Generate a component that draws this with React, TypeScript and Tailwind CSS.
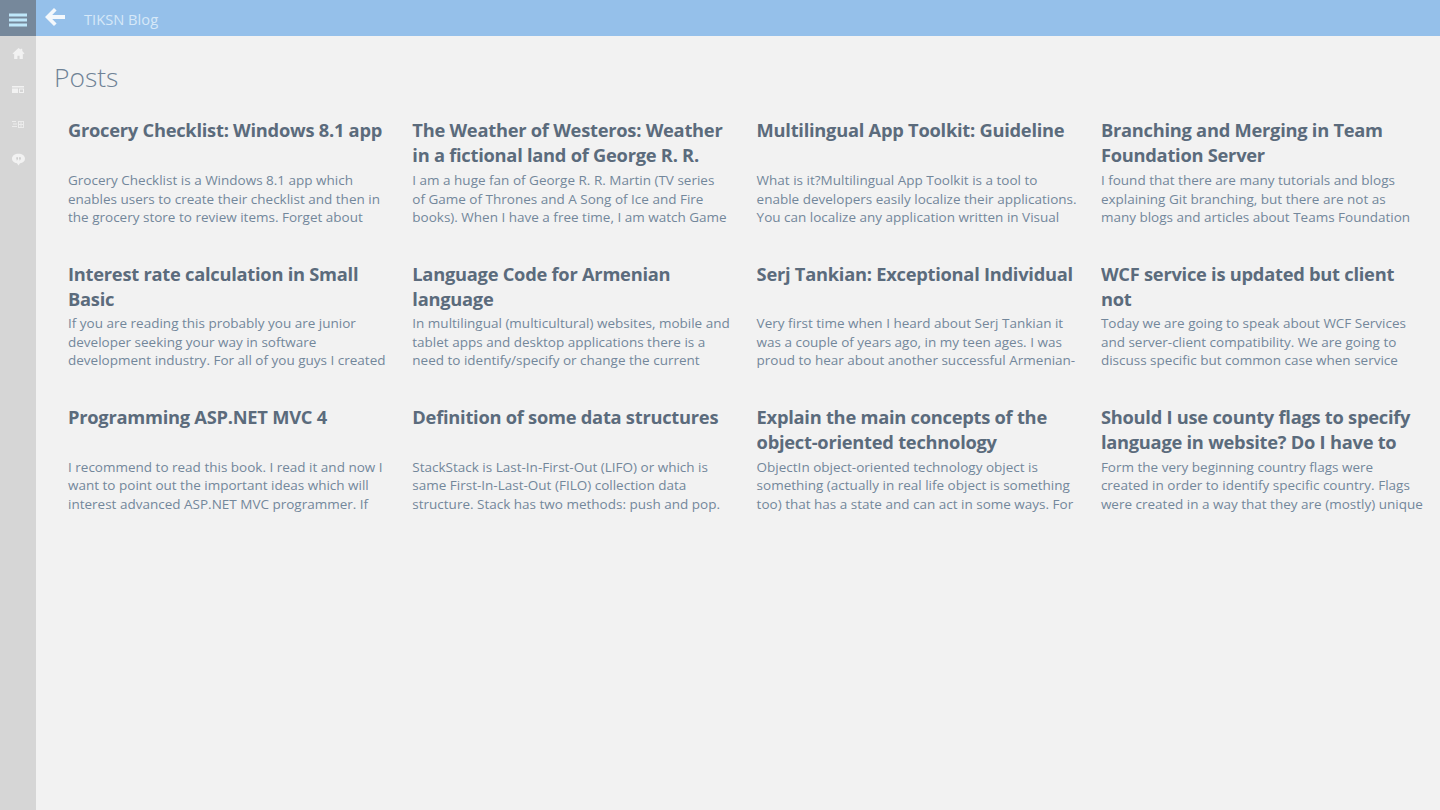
const posts = [
  {
    title: 'Grocery Checklist: Windows 8.1 app',
    lines: ['Grocery Checklist is a Windows 8.1 app which', 'enables users to create their checklist and then in', 'the grocery store to review items. Forget about'],
  },
  {
    title: 'The Weather of Westeros: Weather in a fictional land of George R. R.',
    lines: ['I am a huge fan of George R. R. Martin (TV series', 'of Game of Thrones and A Song of Ice and Fire', 'books). When I have a free time, I am watch Game'],
  },
  {
    title: 'Multilingual App Toolkit: Guideline',
    lines: ['What is it?Multilingual App Toolkit is a tool to', 'enable developers easily localize their applications.', 'You can localize any application written in Visual'],
  },
  {
    title: 'Branching and Merging in Team Foundation Server',
    lines: ['I found that there are many tutorials and blogs', 'explaining Git branching, but there are not as', 'many blogs and articles about Teams Foundation'],
  },
  {
    title: 'Interest rate calculation in Small Basic',
    lines: ['If you are reading this probably you are junior', 'developer seeking your way in software', 'development industry. For all of you guys I created'],
  },
  {
    title: 'Language Code for Armenian language',
    lines: ['In multilingual (multicultural) websites, mobile and', 'tablet apps and desktop applications there is a', 'need to identify/specify or change the current'],
  },
  {
    title: 'Serj Tankian: Exceptional Individual',
    lines: ['Very first time when I heard about Serj Tankian it', 'was a couple of years ago, in my teen ages. I was', 'proud to hear about another successful Armenian-'],
  },
  {
    title: 'WCF service is updated but client not',
    lines: ['Today we are going to speak about WCF Services', 'and server-client compatibility. We are going to', 'discuss specific but common case when service'],
  },
  {
    title: 'Programming ASP.NET MVC 4',
    lines: ['I recommend to read this book. I read it and now I', 'want to point out the important ideas which will', 'interest advanced ASP.NET MVC programmer. If'],
  },
  {
    title: 'Definition of some data structures',
    lines: ['StackStack is Last-In-First-Out (LIFO) or which is', 'same First-In-Last-Out (FILO) collection data', 'structure. Stack has two methods: push and pop.'],
  },
  {
    title: 'Explain the main concepts of the object-oriented technology',
    lines: ['ObjectIn object-oriented technology object is', 'something (actually in real life object is something', 'too) that has a state and can act in some ways. For'],
  },
  {
    title: 'Should I use county flags to specify language in website? Do I have to',
    lines: ['Form the very beginning country flags were', 'created in order to identify specific country. Flags', 'were created in a way that they are (mostly) unique'],
  },
];

function RailIcon({ children }: { children: React.ReactNode }) {
  return <div className="flex h-[35.4px] items-center justify-center">{children}</div>;
}

export default function App() {
  return (
    <div className="flex h-[810px] flex-col overflow-hidden bg-[#f2f2f2] font-['Open_Sans',sans-serif]">
      <header className="flex h-9 shrink-0 items-center bg-[#95c0ea]">
        <div className="flex h-9 w-9 items-center justify-center bg-[#76889b]">
          <div className="flex w-[18px] translate-y-[1.5px] flex-col gap-[2px]">
            <span className="h-[3px] bg-[#bfe7fa]" />
            <span className="h-[3px] bg-[#bfe7fa]" />
            <span className="h-[3px] bg-[#bfe7fa]" />
          </div>
        </div>
        <svg viewBox="0 0 20 18" className="ml-[9px] h-[18px] w-[20px] -translate-y-[1px] fill-[#f4f8fc]">
          <path d="M9 0 0 8.9 9 18l2.6-2.5L7.2 11H20V7H7.2l4.4-4.5Z" />
        </svg>
        <span className="ml-[19px] translate-y-[1px] text-[14.7px] text-[#d6e8f8]">TIKSN Blog</span>
      </header>
      <div className="flex min-h-0 flex-1">
        <aside className="flex w-9 shrink-0 flex-col bg-[#d6d6d6]">
          <RailIcon>
            <svg viewBox="0 0 12 12" className="h-[13px] w-[13px] fill-[#f2f2f2]">
              <path d="M6 1 0.5 6l.7.7L2 6v5h3V8h2v3h3V6l.8.7.7-.7L9.5 3.7V1.5H8v.9Z" />
            </svg>
          </RailIcon>
          <RailIcon>
            <svg viewBox="0 0 12 7" className="h-[7px] w-3 fill-[#f2f2f2]">
              <path d="M0 0h12v1.5H0ZM0 2.5h6V7H0ZM7 2.5h5V7H7Zm1 1V6h3V3.5Z" />
            </svg>
          </RailIcon>
          <RailIcon>
            <svg viewBox="0 0 12 8" className="h-2 w-3 fill-[#ececec]">
              <path d="M0 1h4v1H0ZM1 3.5h4v1H1ZM0 6h5v1H0ZM6 1h6v7H6Zm1 1v2h1.5V2Zm2.5 0v2H11V2ZM7 5v2h1.5V5Zm2.5 0v2H11V5Z" />
            </svg>
          </RailIcon>
          <RailIcon>
            <svg viewBox="0 0 12 12" className="h-[13px] w-[13px]">
              <path className="fill-[#f2f2f2]" d="M6 .8C2.7.8 0 2.7 0 5.2c0 2.2 2 3.9 4.6 4.3L6 11.5l1.4-2C10 9.1 12 7.4 12 5.2 12 2.7 9.3.8 6 .8Z" />
              <path className="fill-[#cccccc]" d="M4 4h1.5v1.5L4.8 6.8H4l.5-1.3H4ZM6.6 4h1.5v1.5L7.4 6.8h-.8l.5-1.3h-.5Z" />
            </svg>
          </RailIcon>
        </aside>
        <main className="min-w-0 flex-1 pl-[18px] pt-[20px]">
          <h1 className="text-[26.4px] leading-[42px] font-light text-[#6f8296]">Posts</h1>
          <div className="mt-[19.4px] grid grid-cols-[repeat(4,344.3px)] gap-y-[33.9px] pl-[14px]">
            {posts.map((post) => (
              <article key={post.title} className="w-[326px]">
                <h2 className="line-clamp-2 h-[50px] w-[318px] text-[18.3px] leading-[25px] font-bold tracking-[-0.25px] text-[#5b6b7c]">{post.title}</h2>
                <div className="mt-[3.6px] text-[13.5px] leading-[18.6px] whitespace-nowrap text-[#73879b]">
                  {post.lines.map((line) => (
                    <div key={line}>{line}</div>
                  ))}
                </div>
              </article>
            ))}
          </div>
        </main>
      </div>
    </div>
  );
}
